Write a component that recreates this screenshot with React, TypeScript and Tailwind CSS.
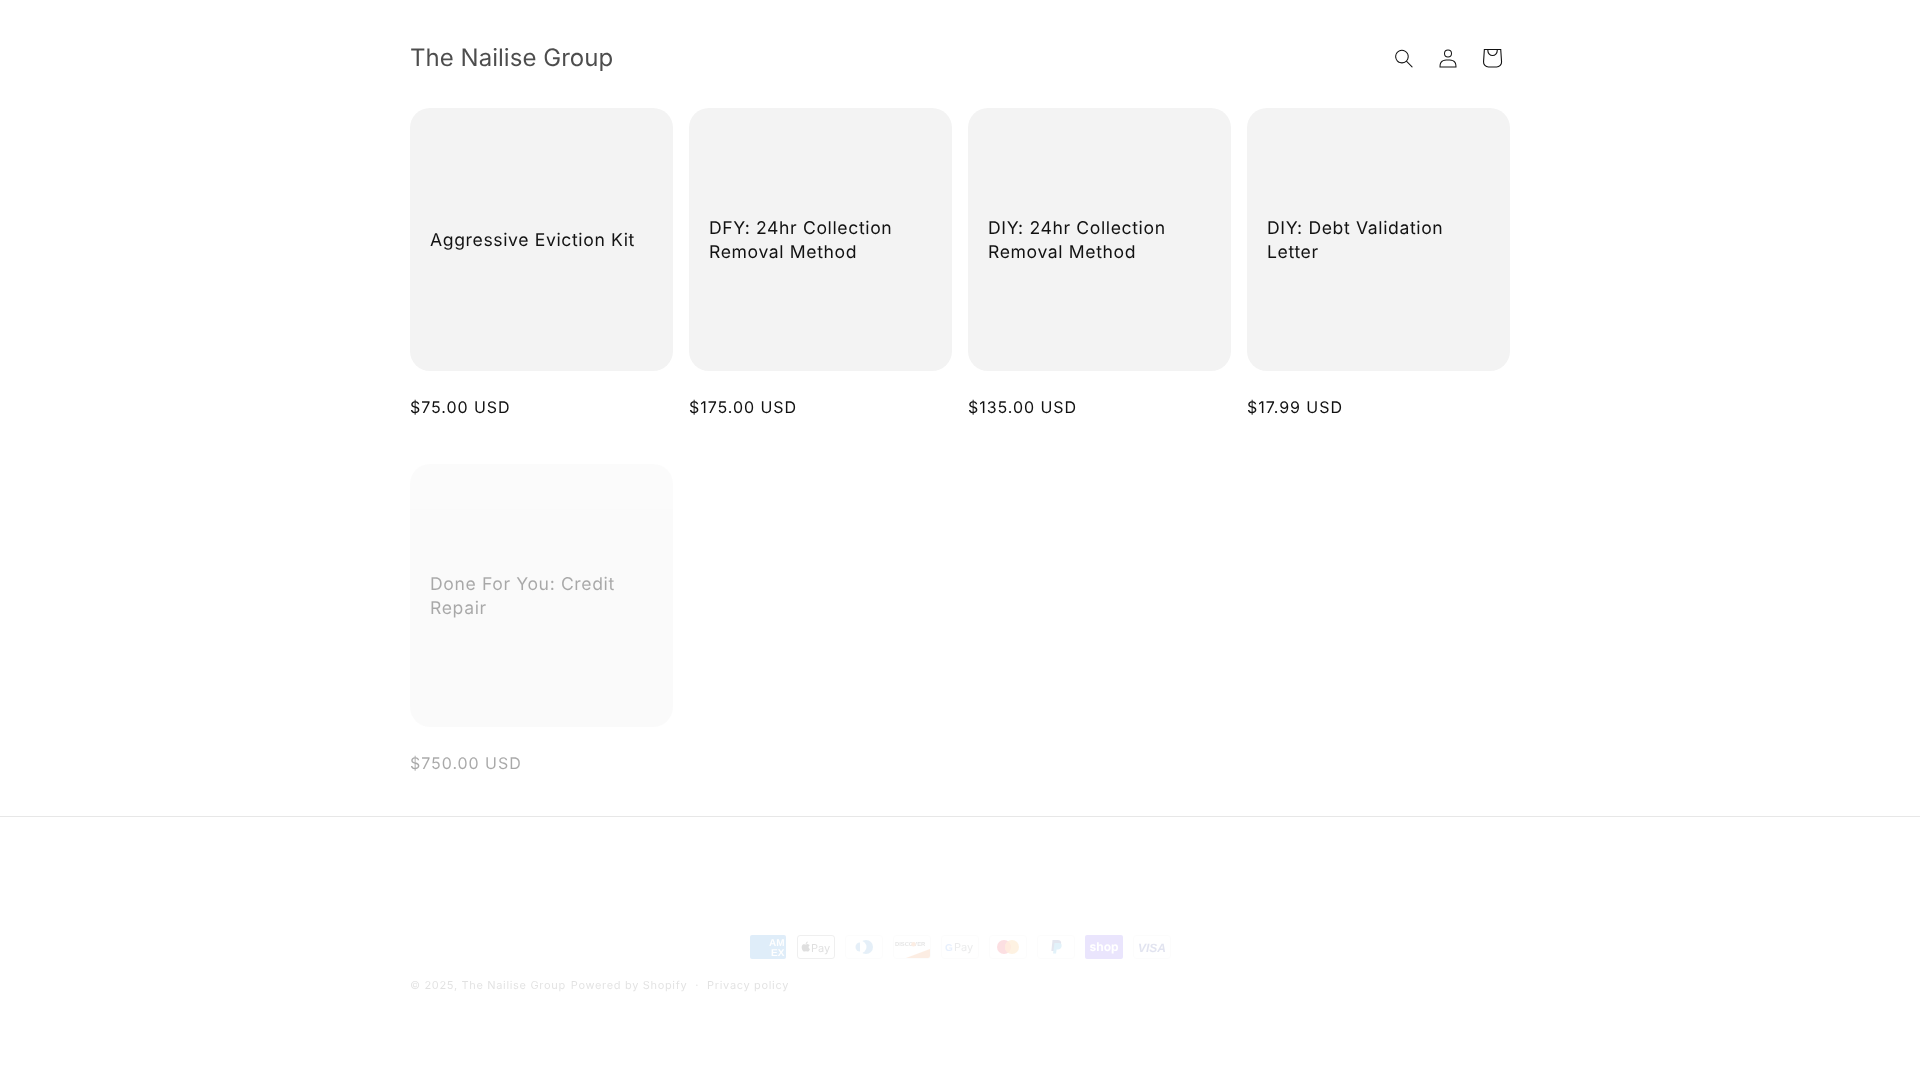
const font = "font-['Inter','Liberation_Sans',sans-serif]";

const products = [
  { title: "Aggressive Eviction Kit", price: "$75.00 USD" },
  { title: "DFY: 24hr Collection Removal Method", price: "$175.00 USD" },
  { title: "DIY: 24hr Collection Removal Method", price: "$135.00 USD" },
  { title: "DIY: Debt Validation Letter", price: "$17.99 USD" },
];

function ProductCard({ title, price }: { title: string; price: string }) {
  return (
    <div>
      <div className="flex h-[263px] items-center rounded-[20px] bg-[#f3f3f3] px-5 pb-5 pt-[23px]">
        <h3 className="text-[17.6px] leading-[24.5px] tracking-[0.62px] text-[#121212]">{title}</h3>
      </div>
      <div className="mt-[25px] text-[16px] leading-[22px] tracking-[0.95px] text-[#121212]">{price}</div>
    </div>
  );
}

function SearchIcon() {
  return (
    <svg viewBox="0 0 18 19" className="h-[19px] w-[18px] fill-[#121212]">
      <path fillRule="evenodd" d="M11.03 11.68A5.784 5.784 0 112.85 3.5a5.784 5.784 0 018.18 8.18zm.26 1.12a6.78 6.78 0 11.72-.7l5.4 5.4a.5.5 0 11-.71.7l-5.41-5.4z" />
    </svg>
  );
}

function AccountIcon() {
  return (
    <svg viewBox="0 0 18 19" className="h-[19px] w-[18px] fill-[#121212]">
      <path fillRule="evenodd" d="M6 4.5a3 3 0 116 0 3 3 0 01-6 0zm3-4a4 4 0 100 8 4 4 0 000-8zm5.58 12.15c1.12.82 1.83 2.24 1.91 4.85H1.51c.08-2.6.79-4.03 1.9-4.85C4.66 11.75 6.5 11.5 9 11.5s4.35.26 5.58 1.15zM9 10.5c-2.5 0-4.65.24-6.17 1.35C1.27 12.98.5 14.93.5 18v.5h17V18c0-3.07-.77-5.02-2.33-6.15-1.52-1.1-3.67-1.35-6.17-1.35z" />
    </svg>
  );
}

function CartIcon() {
  return (
    <svg viewBox="0 0 40 40" className="h-11 w-11 fill-[#121212]">
      <path fillRule="evenodd" d="M15.75 11.8h-3.16l-.77 11.6a5 5 0 0 0 4.99 5.34h7.38a5 5 0 0 0 4.99-5.33L28.4 11.8zm0 1h-2.22l-.71 10.67a4 4 0 0 0 3.99 4.27h7.38a4 4 0 0 0 4-4.27l-.72-10.67h-2.22v.63a4.75 4.75 0 1 1-9.5 0zm8.5 0h-7.5v.63a3.75 3.75 0 1 0 7.5 0z" />
    </svg>
  );
}

function PayBox({ children }: { children: React.ReactNode }) {
  return (
    <svg viewBox="0 0 38 24" className="h-6 w-[38px]">
      {children}
    </svg>
  );
}

function PaymentIcons() {
  const outline = <rect x="0.5" y="0.5" width="37" height="23" rx="2.5" fill="#fff" stroke="#000" strokeOpacity="0.07" />;
  return (
    <div className="flex justify-center gap-[10px]">
      <PayBox>
        <rect width="36" height="24" x="1" rx="2" fill="#016fd0" />
        <text x="20" y="11" fontSize="10" fontWeight="700" fill="#fff" fontFamily="Liberation Sans">AM</text>
        <text x="22" y="21" fontSize="10" fontWeight="700" fill="#fff" fontFamily="Liberation Sans">EX</text>
      </PayBox>
      <PayBox>
        <rect x="0.5" y="0.5" width="37" height="23" rx="2.5" fill="#fff" stroke="#000" strokeOpacity="0.5" />
        <path d="M10.2 8.2c-.4.5-1 .8-1.5.8-.1-.6.2-1.200.5-1.600.4-.4 1-.8 1.500-.8 0 .6-.2 1.200-.5 1.600zm.5.900c-.8 0-1.500.5-1.900.5s-1-.5-1.700-.4c-.8 0-1.600.5-2 1.200-.9 1.500-.2 3.800.6 5 .4.600.9 1.300 1.600 1.200.6 0 .9-.4 1.700-.4s1 .4 1.700.4 1.100-.6 1.500-1.200c.5-.7.7-1.300.7-1.400-.6-.2-1.300-1-1.300-2 0-.9.700-1.500 1.100-1.800-.5-.8-1.400-1-1.700-1z" fill="#000" />
        <text x="14" y="16.500" fontSize="11" fill="#000" fontFamily="Inter">Pay</text>
      </PayBox>
      <PayBox>
        {outline}
        <circle cx="21" cy="12" r="7" fill="#3086c8" />
        <circle cx="15" cy="12" r="6.500" fill="#fff" />
        <path d="M15 7.500a4.500 4.500 0 0 0 0 9z" fill="#3086c8" />
      </PayBox>
      <PayBox>
        {outline}
        <path d="M13 23l24-9v7a2 2 0 0 1-2 2z" fill="#ee7623" />
        <text x="2" y="11" fontSize="5.800" fontWeight="700" fill="#333" fontFamily="Liberation Sans">DISCOVER</text>
        <circle cx="20.500" cy="9.200" r="2.300" fill="#ee7623" />
      </PayBox>
      <PayBox>
        {outline}
        <text x="4" y="15.500" fontSize="10" fontWeight="700" fill="#4285f4" fontFamily="Liberation Sans">G</text>
        <text x="13" y="16" fontSize="11" fill="#5f6368" fontFamily="Inter">Pay</text>
      </PayBox>
      <PayBox>
        {outline}
        <circle cx="15" cy="12" r="7" fill="#eb001b" />
        <circle cx="23" cy="12" r="7" fill="#f79e1b" />
        <path d="M19 6.300a7 7 0 0 1 0 11.400 7 7 0 0 1 0-11.400z" fill="#ff5f00" />
      </PayBox>
      <PayBox>
        {outline}
        <path d="M15.500 5h5.200c2.500 0 3.700 1.300 3.400 3.400-.4 2.700-2 4-4.300 4H18l-.6 3.500h-3z" fill="#253b80" />
        <path d="M17.500 8h4.500c1.800 0 3 1 2.600 3.200-.4 2.300-2 3.300-3.800 3.300h-1.200l-.6 4H16z" fill="#179bd7" />
      </PayBox>
      <PayBox>
        <rect width="38" height="24" rx="2" fill="#5a31f4" />
        <text x="19" y="16" textAnchor="middle" fontSize="12" fontWeight="700" fill="#fff" fontFamily="Inter">shop</text>
      </PayBox>
      <PayBox>
        {outline}
        <text x="19" y="16.500" textAnchor="middle" fontSize="12" fontWeight="700" fontStyle="italic" fill="#142688" fontFamily="Liberation Sans">VISA</text>
      </PayBox>
    </div>
  );
}

export default function App() {
  return (
    <div className={`min-h-screen bg-white will-change-transform [text-rendering:geometricPrecision] ${font}`}>
      <div className="mx-auto max-w-[1200px] px-[50px]">
        <header className="flex h-[108px] items-center justify-between pt-2">
          <div className="text-[24px] leading-[32px] tracking-[0.03px] text-[#121212]/75">The Nailise Group</div>
          <div className="-mr-1 flex">
            <button type="button" className="flex h-11 w-11 items-center justify-center"><SearchIcon /></button>
            <button type="button" className="flex h-11 w-11 items-center justify-center"><AccountIcon /></button>
            <button type="button" className="flex h-11 w-11 items-center justify-center"><CartIcon /></button>
          </div>
        </header>

        <div className="grid grid-cols-4 gap-x-4 gap-y-[46px]">
          {products.map((p) => (
            <ProductCard key={p.title} title={p.title} price={p.price} />
          ))}
          <div className="opacity-[0.36]">
            <ProductCard title="Done For You: Credit Repair" price="$750.00 USD" />
          </div>
        </div>
      </div>

      <footer className="mt-[42px] border-t border-[#e7e7e7]">
        <div className="mx-auto max-w-[1200px] px-[50px] pt-[118px] opacity-[0.12] blur-[0.6px]">
          <PaymentIcons />
          <div className="mt-[17px] flex gap-[5px] text-[11px] leading-[18px] tracking-[0.67px] text-[#121212]">
            <span>© 2025, The Nailise Group</span>
            <span>Powered by Shopify</span>
            <span className="mx-[3px]">·</span>
            <span>Privacy policy</span>
          </div>
        </div>
      </footer>
    </div>
  );
}
